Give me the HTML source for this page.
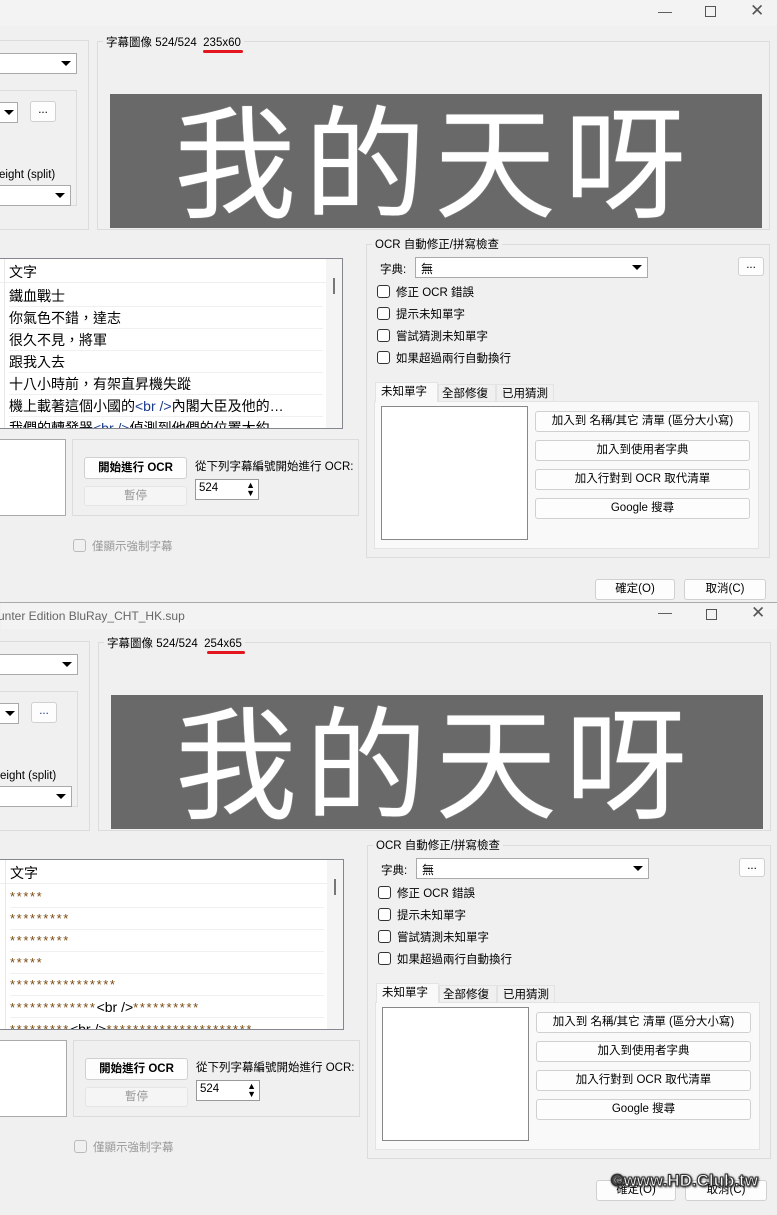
<!DOCTYPE html>
<html><head><meta charset="utf-8">
<style>
*{box-sizing:border-box;margin:0;padding:0}
body{width:777px;height:1215px;overflow:hidden;background:#f0f0f0;font-family:"Liberation Sans","Noto Sans CJK TC",sans-serif;font-size:12px;color:#000;position:relative}
.win{position:absolute;left:0;width:777px;height:603px;background:#f0f0f0;overflow:hidden}
.a{position:absolute}
.tb{position:absolute;left:0;top:0;width:777px;height:28px;background:#f3f3f3}
.ctl{position:absolute;top:5px;font-size:14px;color:#555}
.grp{position:absolute;border:1px solid #dcdcdc}
.gt{position:absolute;background:#f0f0f0;padding:0 3px;font-size:11.5px;white-space:nowrap}
.combo{position:absolute;background:#fff;border:1px solid #aaa}
.arr{position:absolute;right:5px;top:7px;width:0;height:0;border-left:5px solid transparent;border-right:5px solid transparent;border-top:5px solid #000}
.btn{position:absolute;background:#fdfdfd;border:1px solid #d0d0d0;border-radius:3px;text-align:center;font-size:11.5px;line-height:18px;white-space:nowrap}
.list{position:absolute;background:#fff;border:1px solid #828790;overflow:hidden}
.row{position:absolute;left:10px;height:22px;border-bottom:1px solid #f0f0f0;width:314px;font-size:14px;line-height:22px;padding-left:0;white-space:nowrap}
.cb{position:absolute;width:13px;height:13px;border:1px solid #333;border-radius:3px;background:#fff}
.lbl{position:absolute;font-size:11.5px;white-space:nowrap}
.img{position:absolute;background:#696969;overflow:hidden}
.big{position:absolute;color:#fff;font-family:"Noto Sans CJK TC",sans-serif;font-size:122px;line-height:1;letter-spacing:8px;font-weight:400;white-space:nowrap;text-shadow:0 0 1px #ccc}
.star{color:#7a4a10;font-size:13px;letter-spacing:1.6px}
</style></head><body>

<!-- WINDOW 1 -->
<div class="win" style="top:-2px;height:605px">
 <div style="position:absolute;left:0;top:2px;width:777px;height:603px">
  <div class="tb" style="top:-2px"></div>
  <div class="ctl" style="left:658px;top:3px">—</div>
  <div class="a" style="left:705px;top:6px;width:11px;height:11px;border:1px solid #555"></div>
  <div class="ctl" style="left:750px;top:1px;font-size:17px">✕</div>

  <div class="grp" style="left:-2px;top:40px;width:91px;height:190px"></div>
  <div class="combo" style="left:-2px;top:53px;width:79px;height:21px"><div class="arr"></div></div>
  <div class="grp" style="left:-2px;top:90px;width:79px;height:116px"></div>
  <div class="combo" style="left:-2px;top:102px;width:20px;height:21px"><div class="arr" style="right:3px"></div></div>
  <div class="btn" style="left:30px;top:101px;width:26px;height:21px;line-height:16px">...</div>
  <div class="lbl" style="left:-1px;top:169px">eight (split)</div>
  <div class="combo" style="left:-2px;top:185px;width:73px;height:21px"><div class="arr"></div></div>

  <div class="grp" style="left:97px;top:41px;width:673px;height:189px"></div>
  <div class="gt" style="left:103px;top:34px">字幕圖像 524/524 &nbsp;235x60</div>
  <div class="a" style="left:203px;top:50px;width:40px;height:3px;background:#e3161e;border-radius:2px"></div>
  <div class="img" style="left:110px;top:94px;width:652px;height:134px">
   <div class="big" style="left:64px;top:1px">我的天呀</div>
  </div>

  <div class="list" style="left:-2px;top:258px;width:345px;height:171px">
   <div class="a" style="left:0;top:0;width:328px;height:24px;border-bottom:1px solid #eee"></div>
   <div class="a" style="left:5px;top:0;width:1px;height:170px;background:#e8e8e8"></div>
   <div class="row" style="top:2px;border:0">文字</div>
   <div class="row" style="top:26px">鐵血戰士</div>
   <div class="row" style="top:48px">你氣色不錯，達志</div>
   <div class="row" style="top:70px">很久不見，將軍</div>
   <div class="row" style="top:92px">跟我入去</div>
   <div class="row" style="top:114px">十八小時前，有架直昇機失蹤</div>
   <div class="row" style="top:136px">機上載著這個小國的<span style="color:#1a3a8a">&lt;br /&gt;</span>內閣大臣及他的…</div>
   <div class="row" style="top:158px">我們的轉發器<span style="color:#1a3a8a">&lt;br /&gt;</span>偵測到他們的位置大約</div>
   <div class="a" style="left:327px;top:0;width:17px;height:170px;background:#f4f4f4"></div>
   <div class="a" style="left:334px;top:19px;width:2px;height:16px;background:#777"></div>
  </div>

  <div class="a" style="left:-2px;top:439px;width:68px;height:77px;background:#fff;border:1px solid #aaa"></div>
  <div class="grp" style="left:72px;top:439px;width:287px;height:77px"></div>
  <div class="btn" style="left:84px;top:457px;width:103px;height:22px;line-height:20px;font-weight:bold">開始進行 OCR</div>
  <div class="btn" style="left:84px;top:486px;width:103px;height:20px;color:#999;background:#f5f5f5;border-color:#e5e5e5">暫停</div>
  <div class="lbl" style="left:195px;top:458px">從下列字幕編號開始進行 OCR:</div>
  <div class="a" style="left:195px;top:479px;width:64px;height:21px;background:#fff;border:1px solid #999;padding:2px 3px;font-size:11.5px">524<span style="position:absolute;right:3px;top:1px;font-size:9px;line-height:8px">▲<br>▼</span></div>
  <div class="cb" style="left:73px;top:539px;border-color:#bbb;background:#f0f0f0"></div>
  <div class="lbl" style="left:92px;top:538px;color:#999">僅顯示強制字幕</div>

  <div class="grp" style="left:366px;top:244px;width:404px;height:314px"></div>
  <div class="gt" style="left:372px;top:236px">OCR 自動修正/拼寫檢查</div>
  <div class="lbl" style="left:380px;top:261px">字典:</div>
  <div class="combo" style="left:415px;top:257px;width:233px;height:21px;padding:2px 5px;font-size:12px">無<div class="arr"></div></div>
  <div class="btn" style="left:738px;top:257px;width:26px;height:19px;line-height:14px">...</div>
  <div class="cb" style="left:377px;top:285px"></div><div class="lbl" style="left:396px;top:284px">修正 OCR 錯誤</div>
  <div class="cb" style="left:377px;top:307px"></div><div class="lbl" style="left:396px;top:306px">提示未知單字</div>
  <div class="cb" style="left:377px;top:329px"></div><div class="lbl" style="left:396px;top:328px">嘗試猜測未知單字</div>
  <div class="cb" style="left:377px;top:351px"></div><div class="lbl" style="left:396px;top:350px">如果超過兩行自動換行</div>
  <div class="a" style="left:374px;top:401px;width:385px;height:148px;background:#f9f9f9;border:1px solid #e3e3e3"></div>
  <div class="a" style="left:375px;top:382px;width:63px;height:20px;background:#f9f9f9;border:1px solid #e3e3e3;border-bottom:0"></div>
  <div class="lbl" style="left:381px;top:383px">未知單字</div>
  <div class="a" style="left:438px;top:384px;width:58px;height:17px;border:1px solid #e3e3e3;border-bottom:0;background:#f0f0f0"></div>
  <div class="lbl" style="left:442px;top:385px">全部修復</div>
  <div class="a" style="left:496px;top:384px;width:58px;height:17px;border:1px solid #e3e3e3;border-bottom:0;background:#f0f0f0"></div>
  <div class="lbl" style="left:502px;top:385px">已用猜測</div>
  <div class="a" style="left:381px;top:406px;width:147px;height:134px;background:#fff;border:1px solid #888"></div>
  <div class="btn" style="left:535px;top:411px;width:215px;height:21px">加入到 名稱/其它 清單 (區分大小寫)</div>
  <div class="btn" style="left:535px;top:440px;width:215px;height:21px">加入到使用者字典</div>
  <div class="btn" style="left:535px;top:469px;width:215px;height:21px">加入行對到 OCR 取代清單</div>
  <div class="btn" style="left:535px;top:498px;width:215px;height:21px">Google 搜尋</div>

  <div class="btn" style="left:595px;top:579px;width:80px;height:21px">確定(O)</div>
  <div class="btn" style="left:684px;top:579px;width:82px;height:21px">取消(C)</div>
 </div>
</div>
<div class="a" style="left:0;top:602px;width:777px;height:1px;background:#aaa"></div>

<!-- WINDOW 2 -->
<div class="win" style="top:603px;height:612px">
 <div style="position:absolute;left:1px;top:-2px;width:777px;height:612px">
  <div class="tb" style="top:0"></div>
  <div class="lbl" style="left:-3px;top:8px;color:#666;font-size:12px">unter Edition BluRay_CHT_HK.sup</div>
  <div class="ctl" style="left:657px;top:3px">—</div>
  <div class="a" style="left:705px;top:8px;width:11px;height:11px;border:1px solid #555"></div>
  <div class="ctl" style="left:750px;top:2px;font-size:17px">✕</div>

  <div class="grp" style="left:-2px;top:40px;width:91px;height:190px"></div>
  <div class="combo" style="left:-2px;top:53px;width:79px;height:21px"><div class="arr"></div></div>
  <div class="grp" style="left:-2px;top:90px;width:79px;height:116px"></div>
  <div class="combo" style="left:-2px;top:102px;width:20px;height:21px"><div class="arr" style="right:3px"></div></div>
  <div class="btn" style="left:30px;top:101px;width:26px;height:21px;line-height:16px;color:#1a3a8a">...</div>
  <div class="lbl" style="left:-1px;top:169px">eight (split)</div>
  <div class="combo" style="left:-2px;top:185px;width:73px;height:21px"><div class="arr"></div></div>

  <div class="grp" style="left:97px;top:41px;width:673px;height:189px"></div>
  <div class="gt" style="left:103px;top:34px">字幕圖像 524/524 &nbsp;254x65</div>
  <div class="a" style="left:206px;top:50px;width:38px;height:3px;background:#e3161e;border-radius:2px"></div>
  <div class="img" style="left:110px;top:94px;width:652px;height:134px">
   <div class="big" style="left:64px;top:1px">我的天呀</div>
  </div>

  <div class="list" style="left:-2px;top:258px;width:345px;height:171px">
   <div class="a" style="left:0;top:0;width:328px;height:24px;border-bottom:1px solid #eee"></div>
   <div class="a" style="left:5px;top:0;width:1px;height:170px;background:#e8e8e8"></div>
   <div class="row" style="top:2px;border:0">文字</div>
   <div class="row star" style="top:26px">*****</div>
   <div class="row star" style="top:48px">*********</div>
   <div class="row star" style="top:70px">*********</div>
   <div class="row star" style="top:92px">*****</div>
   <div class="row star" style="top:114px">****************</div>
   <div class="row star" style="top:136px">*************<span style="color:#000;font-size:14px;letter-spacing:0">&lt;br /&gt;</span>**********</div>
   <div class="row star" style="top:158px">*********<span style="color:#000;font-size:14px;letter-spacing:0">&lt;br /&gt;</span>**********************</div>
   <div class="a" style="left:327px;top:0;width:17px;height:170px;background:#f4f4f4"></div>
   <div class="a" style="left:334px;top:19px;width:2px;height:16px;background:#777"></div>
  </div>

  <div class="a" style="left:-2px;top:439px;width:68px;height:77px;background:#fff;border:1px solid #aaa"></div>
  <div class="grp" style="left:72px;top:439px;width:287px;height:77px"></div>
  <div class="btn" style="left:84px;top:457px;width:103px;height:22px;line-height:20px;font-weight:bold">開始進行 OCR</div>
  <div class="btn" style="left:84px;top:486px;width:103px;height:20px;color:#999;background:#f5f5f5;border-color:#e5e5e5">暫停</div>
  <div class="lbl" style="left:195px;top:458px">從下列字幕編號開始進行 OCR:</div>
  <div class="a" style="left:195px;top:479px;width:64px;height:21px;background:#fff;border:1px solid #999;padding:2px 3px;font-size:11.5px">524<span style="position:absolute;right:3px;top:1px;font-size:9px;line-height:8px">▲<br>▼</span></div>
  <div class="cb" style="left:73px;top:539px;border-color:#bbb;background:#f0f0f0"></div>
  <div class="lbl" style="left:92px;top:538px;color:#999">僅顯示強制字幕</div>

  <div class="grp" style="left:366px;top:244px;width:404px;height:314px"></div>
  <div class="gt" style="left:372px;top:236px">OCR 自動修正/拼寫檢查</div>
  <div class="lbl" style="left:380px;top:261px">字典:</div>
  <div class="combo" style="left:415px;top:257px;width:233px;height:21px;padding:2px 5px;font-size:12px">無<div class="arr"></div></div>
  <div class="btn" style="left:738px;top:257px;width:26px;height:19px;line-height:14px">...</div>
  <div class="cb" style="left:377px;top:285px"></div><div class="lbl" style="left:396px;top:284px">修正 OCR 錯誤</div>
  <div class="cb" style="left:377px;top:307px"></div><div class="lbl" style="left:396px;top:306px">提示未知單字</div>
  <div class="cb" style="left:377px;top:329px"></div><div class="lbl" style="left:396px;top:328px">嘗試猜測未知單字</div>
  <div class="cb" style="left:377px;top:351px"></div><div class="lbl" style="left:396px;top:350px">如果超過兩行自動換行</div>
  <div class="a" style="left:374px;top:401px;width:385px;height:148px;background:#f9f9f9;border:1px solid #e3e3e3"></div>
  <div class="a" style="left:375px;top:382px;width:63px;height:20px;background:#f9f9f9;border:1px solid #e3e3e3;border-bottom:0"></div>
  <div class="lbl" style="left:381px;top:383px">未知單字</div>
  <div class="a" style="left:438px;top:384px;width:58px;height:17px;border:1px solid #e3e3e3;border-bottom:0;background:#f0f0f0"></div>
  <div class="lbl" style="left:442px;top:385px">全部修復</div>
  <div class="a" style="left:496px;top:384px;width:58px;height:17px;border:1px solid #e3e3e3;border-bottom:0;background:#f0f0f0"></div>
  <div class="lbl" style="left:502px;top:385px">已用猜測</div>
  <div class="a" style="left:381px;top:406px;width:147px;height:134px;background:#fff;border:1px solid #888"></div>
  <div class="btn" style="left:535px;top:411px;width:215px;height:21px">加入到 名稱/其它 清單 (區分大小寫)</div>
  <div class="btn" style="left:535px;top:440px;width:215px;height:21px">加入到使用者字典</div>
  <div class="btn" style="left:535px;top:469px;width:215px;height:21px">加入行對到 OCR 取代清單</div>
  <div class="btn" style="left:535px;top:498px;width:215px;height:21px">Google 搜尋</div>

  <div class="btn" style="left:595px;top:579px;width:80px;height:21px">確定(O)</div>
  <div class="btn" style="left:684px;top:579px;width:82px;height:21px">取消(C)</div>
 </div>
</div>

<div class="a" style="left:611px;top:1171px;font-size:17px;font-weight:bold;color:#fff;-webkit-text-stroke:1px #333;text-shadow:0 0 2px #000,1px 1px 2px #000;white-space:nowrap;font-family:'Liberation Sans',sans-serif">©www.HD.Club.tw</div>
</body></html>
